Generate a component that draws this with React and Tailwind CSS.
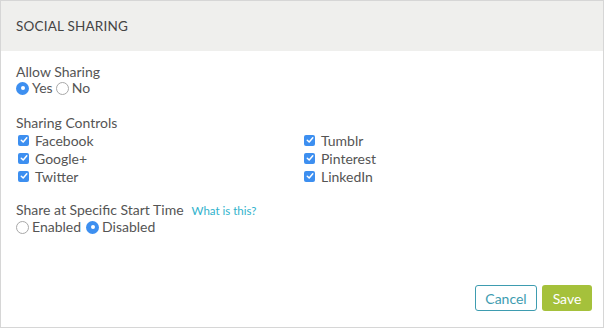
import React from 'react';

const Radio = ({ checked, label }) => (
  <label className="flex items-center gap-[3px]">
    {checked ? (
      <span className="w-[13px] h-[13px] rounded-full bg-[#3d8ff0] flex items-center justify-center">
        <span className="w-[4px] h-[4px] rounded-full bg-white"></span>
      </span>
    ) : (
      <span className="w-[13px] h-[13px] rounded-full border border-[#a8a8a8] bg-white"></span>
    )}
    <span>{label}</span>
  </label>
);

const Check = ({ label }) => (
  <label className="flex items-center gap-[6px] h-[18px]">
    <span className="w-[11px] h-[11px] rounded-[2px] bg-[#3d8ff0] flex items-center justify-center">
      <svg width="8" height="8" viewBox="0 0 8 8" fill="none">
        <path d="M1.3 4.2 L3.2 6 L6.8 1.8" stroke="white" strokeWidth="1.5" strokeLinecap="round" strokeLinejoin="round" />
      </svg>
    </span>
    <span>{label}</span>
  </label>
);

export default function App() {
  return (
    <div className="w-[605px] h-[329px] bg-white" style={{ fontFamily: 'Lato, "Open Sans", sans-serif' }}>
      <div className="w-[604px] h-[328px] border border-[#d6d6d6] flex flex-col text-[14px] text-[#555]">
        {/* Header */}
        <div className="h-[50px] bg-[#efefed] flex items-center px-[15px] text-[#444] text-[13.5px] tracking-[0.2px]">
          SOCIAL SHARING
        </div>

        <div className="flex-1 pl-[15px] pr-[11px] pt-[13px] flex flex-col">
          {/* Allow Sharing */}
          <div className="leading-[16px]">Allow Sharing</div>
          <div className="flex items-center gap-[3px] leading-[16px]">
            <Radio checked label="Yes" />
            <Radio label="No" />
          </div>

          {/* Sharing Controls */}
          <div className="leading-[16px] mt-[19px]">Sharing Controls</div>
          <div className="grid grid-cols-2 pl-[2px] pr-[4px]">
            <div className="flex flex-col">
              <Check label="Facebook" />
              <Check label="Google+" />
              <Check label="Twitter" />
            </div>
            <div className="flex flex-col pl-[1px]">
              <Check label="Tumblr" />
              <Check label="Pinterest" />
              <Check label="LinkedIn" />
            </div>
          </div>

          {/* Start Time */}
          <div className="flex items-baseline leading-[16px] mt-[17px]">
            <span>Share at Specific Start Time</span>
            <a className="ml-[8px] text-[11.5px] text-[#2fb2cc]">What is this?</a>
          </div>
          <div className="flex items-center gap-[5px] leading-[16px]">
            <Radio label="Enabled" />
            <Radio checked label=" Disabled" />
          </div>

          <div className="flex-1"></div>

          {/* Footer */}
          <div className="flex justify-end gap-[5px] pb-[16px]">
            <button className="h-[26px] w-[62px] rounded-[3px] border border-[#3e9cb0] text-[#3e9cb0] text-[14px] bg-white">
              Cancel
            </button>
            <button className="h-[26px] w-[50px] rounded-[3px] bg-[#a5c13b] text-white text-[14px]">
              Save
            </button>
          </div>
        </div>
      </div>
    </div>
  );
}
